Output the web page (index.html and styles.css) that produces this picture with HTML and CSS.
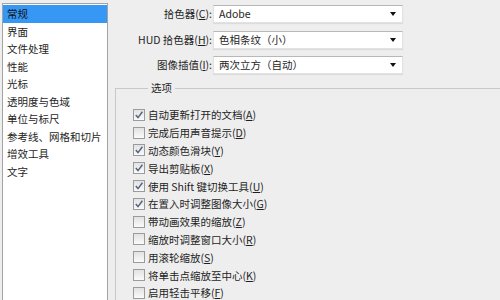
FILE: index.html
```html
<!DOCTYPE html>
<html lang="zh-CN">
<head>
    <meta charset="UTF-8">
    <title>首选项 - 常规</title>
    <link rel="stylesheet" href="styles.css">
</head>
<body>
    <div class="prefs">
        <ul class="cat-list">
            <li class="selected">常规</li>
            <li>界面</li>
            <li>文件处理</li>
            <li>性能</li>
            <li>光标</li>
            <li>透明度与色域</li>
            <li>单位与标尺</li>
            <li>参考线、网格和切片</li>
            <li>增效工具</li>
            <li>文字</li>
        </ul>
        <div class="panel">
            <div class="fields">
                <label class="field-label">拾色器(<u>C</u>):</label>
                <div class="select">Adobe<span class="arrow"></span></div>
                <label class="field-label">HUD 拾色器(<u>H</u>):</label>
                <div class="select">色相条纹（小）<span class="arrow"></span></div>
                <label class="field-label">图像插值(<u>I</u>):</label>
                <div class="select">两次立方（自动）<span class="arrow"></span></div>
            </div>
            <fieldset class="options">
                <legend>选项</legend>
                <div class="opt"><span class="box checked"></span>自动更新打开的文档(<u>A</u>)</div>
                <div class="opt"><span class="box"></span>完成后用声音提示(<u>D</u>)</div>
                <div class="opt"><span class="box checked"></span>动态颜色滑块(<u>Y</u>)</div>
                <div class="opt"><span class="box checked"></span>导出剪贴板(<u>X</u>)</div>
                <div class="opt"><span class="box checked"></span>使用 Shift 键切换工具(<u>U</u>)</div>
                <div class="opt"><span class="box checked"></span>在置入时调整图像大小(<u>G</u>)</div>
                <div class="opt"><span class="box"></span>带动画效果的缩放(<u>Z</u>)</div>
                <div class="opt"><span class="box"></span>缩放时调整窗口大小(<u>R</u>)</div>
                <div class="opt"><span class="box"></span>用滚轮缩放(<u>S</u>)</div>
                <div class="opt"><span class="box"></span>将单击点缩放至中心(<u>K</u>)</div>
                <div class="opt"><span class="box"></span>启用轻击平移(<u>F</u>)</div>
            </fieldset>
        </div>
    </div>
</body>
</html>
```

FILE: styles.css
```css
body {
    margin: 0;
    font-family: "Noto Sans CJK SC", "Noto Sans", sans-serif;
    font-size: 10.5px;
    color: #1e1e1e;
    background: #eeeeee;
}
.prefs {
    display: flex;
    height: 300px;
    overflow: hidden;
}
.cat-list {
    list-style: none;
    margin: 3px 0 0 2px;
    padding: 1px 0 0;
    width: 104px;
    flex-shrink: 0;
    background: #fff;
    border: 1px solid #a3a3a3;
    border-bottom: none;
}
.cat-list li {
    height: 17.5px;
    line-height: 17.5px;
    padding-left: 4px;
}
.cat-list li.selected {
    background: #3797f4;
    color: #111;
}
.panel {
    flex: 1;
    overflow: hidden;
    padding-top: 5px;
}
.fields {
    display: grid;
    grid-template-columns: 105px 190px;
    row-gap: 7.5px;
}
.field-label {
    text-align: right;
    line-height: 18px;
    padding-right: 1px;
}
.select {
    position: relative;
    height: 16px;
    line-height: 16px;
    padding-left: 5px;
    background: #fff;
    border: 1px solid #e2e2e2;
    border-top-color: #b8b8b8;
    box-shadow: 0 1px 1px #dcdcdc;
}
.arrow {
    position: absolute;
    right: 6px;
    top: 6px;
    border-left: 3px solid transparent;
    border-right: 3px solid transparent;
    border-top: 4px solid #111;
}
.options {
    margin: 6px 0 0 7px;
    padding: 10px 0 0 17px;
    width: 500px;
    border: 1px solid #c8c8c8;
    border-right: none;
    border-bottom: none;
}
.options legend {
    margin-left: 15px;
    padding: 0 3px;
    line-height: 16px;
}
.opt {
    display: flex;
    align-items: center;
    height: 17.8px;
}
.box {
    width: 10px;
    height: 10px;
    margin-right: 3px;
    border: 1px solid #9a9b9c;
    background: linear-gradient(#e2e2e2, #fafafa);
}
.box.checked {
    background: url("data:image/svg+xml;utf8,<svg xmlns='http://www.w3.org/2000/svg' width='10' height='10'><path d='M1.8 5 L4 7.6 L8.4 1.8' fill='none' stroke='%23546483' stroke-width='1.5'/></svg>") no-repeat center, linear-gradient(#e2e2e2, #fafafa);
}
u {
    text-decoration: underline;
}
```
